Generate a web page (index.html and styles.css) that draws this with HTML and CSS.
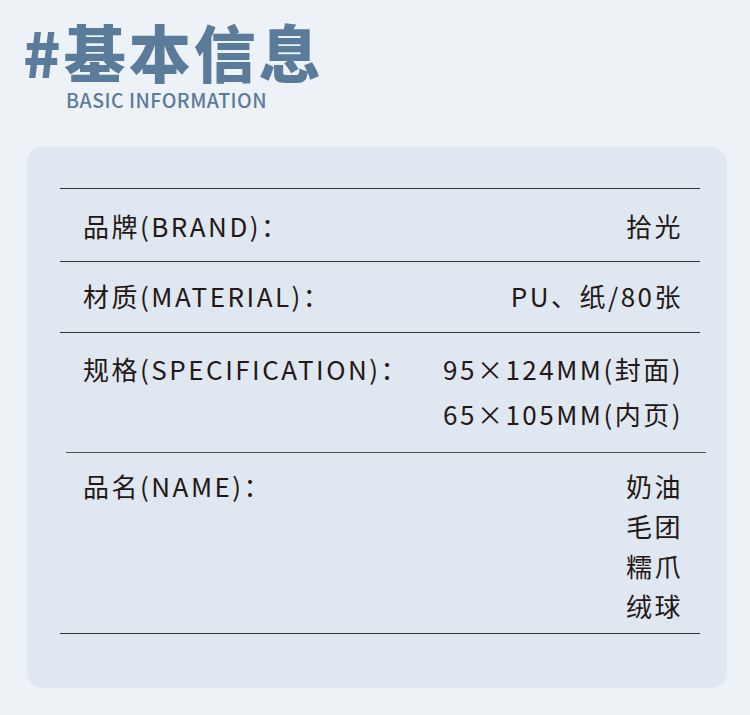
FILE: index.html
```html
<!DOCTYPE html>
<html lang="zh-CN">
<head>
<meta charset="utf-8">
<link rel="stylesheet" href="styles.css">
</head>
<body>
<div class="page">
  <header class="head">
    <h1 class="title">#基本信息</h1>
    <div class="subtitle">BASIC INFORMATION</div>
  </header>
  <section class="card">
    <hr class="rule">
    <div class="row row-1">
      <div class="label">品牌(BRAND)：</div>
      <div class="value">拾光</div>
    </div>
    <hr class="rule">
    <div class="row row-2">
      <div class="label">材质(MATERIAL)：</div>
      <div class="value">PU、纸/80张</div>
    </div>
    <hr class="rule">
    <div class="row row-3">
      <div class="label">规格(SPECIFICATION)：</div>
      <div class="value">95×124MM(封面)<br>65×105MM(内页)</div>
    </div>
    <hr class="rule rule-shift">
    <div class="row row-4">
      <div class="label">品名(NAME)：</div>
      <div class="value">奶油<br>毛团<br>糯爪<br>绒球</div>
    </div>
    <hr class="rule">
  </section>
</div>
</body>
</html>
```

FILE: styles.css
```css
html, body {
  margin: 0;
  padding: 0;
  background: #edf2f7;
}
.page {
  width: 750px;
  height: 715px;
  font-family: "Noto Sans CJK SC", "Noto Sans", sans-serif;
  color: #231815;
  overflow: hidden;
}
.head {
  padding: 19px 0 0 23px;
  height: 133px;
  box-sizing: border-box;
}
.title {
  margin: 0;
  font-size: 62px;
  line-height: 64px;
  font-weight: 900;
  color: #5b7b9b;
  letter-spacing: 3px;
}
.subtitle {
  margin: 6px 0 0 43px;
  font-size: 19.5px;
  line-height: 22px;
  font-weight: 500;
  color: #5b7b9b;
  letter-spacing: 0.5px;
}
.card {
  margin: 14px 23px 0 27px;
  background: #dfe7f0;
  border-radius: 16px;
  padding: 41px 27px 54px 33px;
}
.rule {
  margin: 0;
  border: 0;
  height: 1px;
  background: #333;
}
.rule-shift {
  margin: 0 -6px 0 6px;
  background: #555;
}
.row {
  display: flex;
  justify-content: space-between;
  align-items: flex-start;
  padding: 0 17px 0 23px;
  font-size: 26px;
  font-weight: 400;
  letter-spacing: 2.5px;
}
.label, .value { white-space: nowrap; }
.value { text-align: right; }
.row-1 { padding-top: 20px; padding-bottom: 18px; line-height: 34px; }
.row-2 { padding-top: 17px; padding-bottom: 19px; line-height: 34px; }
.row-3 { padding-top: 13px; padding-bottom: 16px; line-height: 45px; }
.row-4 { padding-top: 13px; padding-bottom: 7px; line-height: 40px; }
```
